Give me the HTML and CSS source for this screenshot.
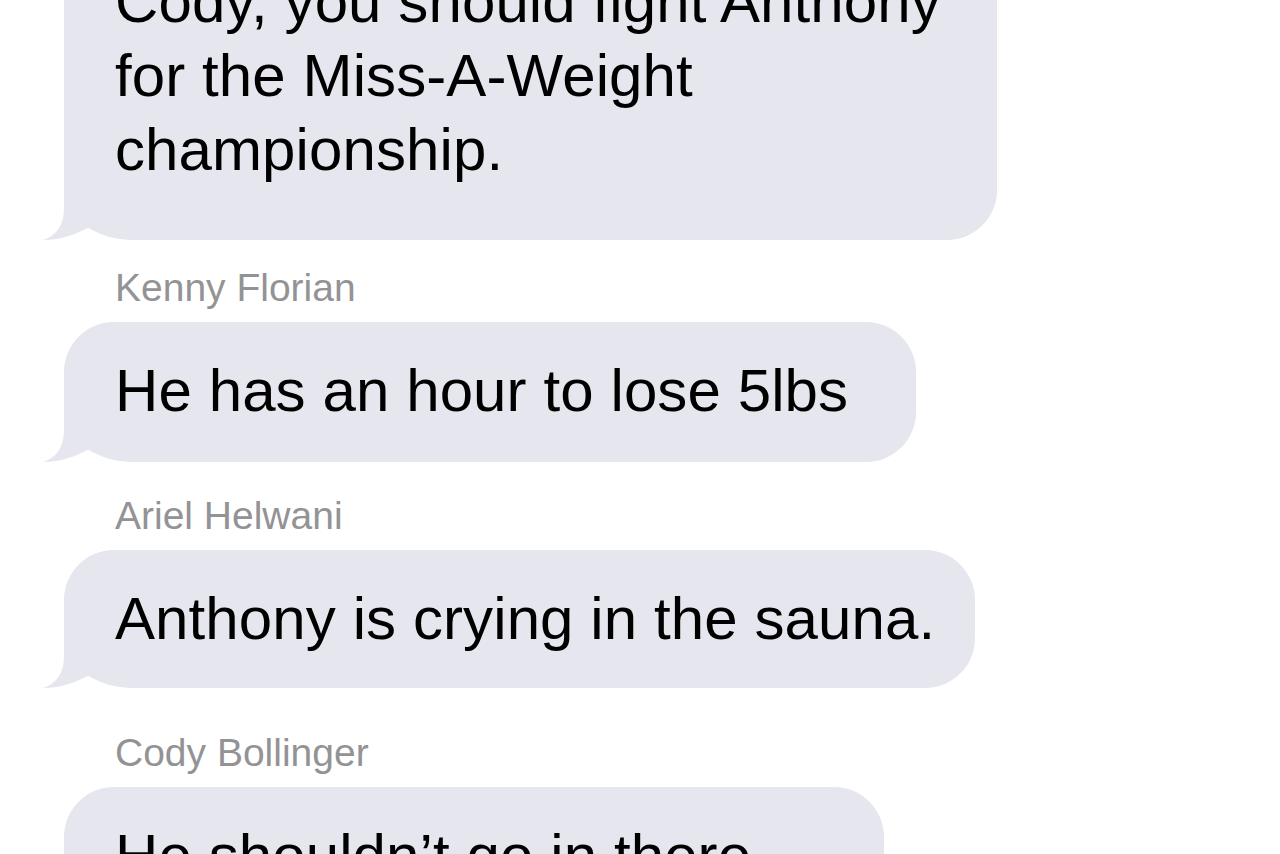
FILE: index.html
```html
<!DOCTYPE html>
<html lang="en">
<head>
<meta charset="utf-8">
<title>Messages</title>
<link rel="stylesheet" href="styles.css">
</head>
<body>
<main class="thread">
  <div class="bubble bubble--tall bubble--w1">Cody, you should fight Anthony for the Miss-A-Weight championship.<svg class="tail" viewBox="0 0 95 50" width="95" height="50" aria-hidden="true"><path d="M21 0 L21 18 C21 36 13 46 0 50 C18 50 34 44 48 36 L62 0 Z"/></svg></div>

  <div class="sender sender--a">Kenny Florian</div>
  <div class="bubble bubble--w2">He has an hour to lose 5lbs<svg class="tail" viewBox="0 0 95 50" width="95" height="50" aria-hidden="true"><path d="M21 0 L21 18 C21 36 13 46 0 50 C18 50 34 44 48 36 L62 0 Z"/></svg></div>

  <div class="sender sender--b">Ariel Helwani</div>
  <div class="bubble bubble--short bubble--w3">Anthony is crying in the sauna.<svg class="tail" viewBox="0 0 95 50" width="95" height="50" aria-hidden="true"><path d="M21 0 L21 18 C21 36 13 46 0 50 C18 50 34 44 48 36 L62 0 Z"/></svg></div>

  <div class="sender sender--c">Cody Bollinger</div>
  <div class="bubble bubble--w4">He shouldn’t go in there.<svg class="tail" viewBox="0 0 95 50" width="95" height="50" aria-hidden="true"><path d="M21 0 L21 18 C21 36 13 46 0 50 C18 50 34 44 48 36 L62 0 Z"/></svg></div>
</main>
</body>
</html>
```
FILE: styles.css
```css
html, body {
  margin: 0;
  padding: 0;
  background: #ffffff;
  overflow: hidden;
}

body {
  font-family: "Liberation Sans", Arial, "Helvetica Neue", Helvetica, sans-serif;
  color: #000;
}

.thread {
  display: flex;
  flex-direction: column;
  align-items: flex-start;
  margin-top: -66px;
  padding-left: 64px;
}

.bubble {
  position: relative;
  box-sizing: border-box;
  background: #e5e6ee;
  border-radius: 50px;
  border-bottom-left-radius: 70px 50px;
  padding: 32px 16px 34px 51px;
  font-size: 60px;
  line-height: 74px;
  letter-spacing: 0.1px;
}

.bubble--tall {
  padding-top: 31px;
  padding-bottom: 53px;
}

.bubble--short {
  padding-bottom: 32px;
}

.bubble--w1 { width: 933px; }
.bubble--w2 { width: 852px; }
.bubble--w3 { width: 911px; }
.bubble--w4 { width: 820px; }

.tail {
  position: absolute;
  left: -21px;
  bottom: 0;
  display: block;
  fill: #e5e6ee;
}

.sender {
  font-size: 39px;
  line-height: 46px;
  color: #939396;
  padding-left: 51px;
  margin-bottom: 11px;
}

.sender--a { margin-top: 25px; }
.sender--b { margin-top: 31px; }
.sender--c { margin-top: 42px; }
```
